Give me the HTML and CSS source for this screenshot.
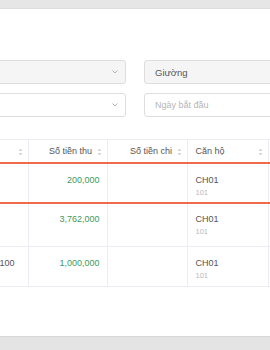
FILE: index.html
```html
<!DOCTYPE html>
<html lang="vi">
<head>
<meta charset="utf-8">
<title>Thu chi</title>
<link rel="stylesheet" href="styles.css">
</head>
<body>
<div class="topbar"></div>
<main class="panel">
  <div class="form">
    <div class="field field-filled">
      <span class="value"></span>
      <svg class="chev" width="6" height="4" viewBox="0 0 6 4"><path d="M0.5 0.5 L3 3 L5.5 0.5" fill="none" stroke="#b0b0b0" stroke-width="1"/></svg>
    </div>
    <div class="field field-filled">
      <span class="value">Giường</span>
    </div>
    <div class="field">
      <span class="value"></span>
      <svg class="chev" width="6" height="4" viewBox="0 0 6 4"><path d="M0.5 0.5 L3 3 L5.5 0.5" fill="none" stroke="#b0b0b0" stroke-width="1"/></svg>
    </div>
    <div class="field">
      <span class="placeholder">Ngày bắt đầu</span>
    </div>
  </div>

  <table class="grid">
    <colgroup>
      <col class="c1"><col class="c2"><col class="c3"><col class="c4"><col class="c5">
    </colgroup>
    <thead>
      <tr>
        <th class="num"><span class="sort"><svg width="5" height="8" viewBox="0 0 5 8"><path d="M2.5 0.5 L4.5 3 L0.5 3 Z M2.5 7.5 L4.5 5 L0.5 5 Z" fill="#d4d4d8"/></svg></span></th>
        <th class="num">Số tiền thu <span class="sort"><svg width="5" height="8" viewBox="0 0 5 8"><path d="M2.5 0.5 L4.5 3 L0.5 3 Z M2.5 7.5 L4.5 5 L0.5 5 Z" fill="#d4d4d8"/></svg></span></th>
        <th class="num">Số tiền chi <span class="sort"><svg width="5" height="8" viewBox="0 0 5 8"><path d="M2.5 0.5 L4.5 3 L0.5 3 Z M2.5 7.5 L4.5 5 L0.5 5 Z" fill="#d4d4d8"/></svg></span></th>
        <th class="txt"><span class="th-in">Căn hộ <span class="sort"><svg width="5" height="8" viewBox="0 0 5 8"><path d="M2.5 0.5 L4.5 3 L0.5 3 Z M2.5 7.5 L4.5 5 L0.5 5 Z" fill="#d4d4d8"/></svg></span></span></th>
        <th class="txt"></th>
      </tr>
    </thead>
    <tbody>
      <tr class="hl">
        <td class="num first"></td>
        <td class="num money">200,000</td>
        <td class="num"></td>
        <td class="txt"><div class="apt">CH01</div><div class="room">101</div></td>
        <td class="txt"></td>
      </tr>
      <tr class="tall">
        <td class="num first"></td>
        <td class="num money">3,762,000</td>
        <td class="num"></td>
        <td class="txt"><div class="apt">CH01</div><div class="room">101</div></td>
        <td class="txt"></td>
      </tr>
      <tr>
        <td class="num first">100</td>
        <td class="num money">1,000,000</td>
        <td class="num"></td>
        <td class="txt"><div class="apt">CH01</div><div class="room">101</div></td>
        <td class="txt"></td>
      </tr>
    </tbody>
  </table>
</main>
<div class="bottombar"></div>
</body>
</html>
```

FILE: styles.css
```css
* { box-sizing: border-box; }
html, body {
  margin: 0;
  padding: 0;
  width: 270px;
  height: 350px;
  overflow: hidden;
  background: #ffffff;
  font-family: "Liberation Sans", Arial, sans-serif;
  color: #555;
}
.topbar {
  height: 9px;
  background: #e6e6e6;
  border-bottom: 1px solid #dcdcdc;
}
.panel {
  height: 327px;
  overflow: hidden;
  padding-top: 51px;
}
.form {
  display: grid;
  grid-template-columns: 226px 226px;
  column-gap: 18px;
  row-gap: 9px;
  margin-left: -100px;
}
.field {
  height: 24px;
  border: 1px solid #dedede;
  border-radius: 3px;
  background: #fff;
  display: flex;
  align-items: center;
  justify-content: space-between;
  padding: 0 7px 0 10px;
  font-size: 9.5px;
}
.field-filled { background: #f5f5f5; }
.value { color: #555; }
.placeholder { color: #b5b5b5; font-size: 9px; }
.chev { display: block; }

.grid {
  margin-top: 22px;
  margin-left: -100px;
  border-collapse: collapse;
  table-layout: fixed;
  width: 488px;
  font-size: 9px;
}
.c1 { width: 128px; }
.c2 { width: 79px; }
.c3 { width: 80px; }
.c4 { width: 81px; }
.c5 { width: 120px; }
.grid th, .grid td {
  border-right: 1px solid #ecedf3;
  border-bottom: 1px solid #ecedf3;
}
.grid th {
  border-top: 1px solid #ecedf3;
  font-weight: normal;
  color: #555;
  line-height: 11px;
  padding: 6px 5px 5px 8px;
  height: 23px;
  white-space: nowrap;
}
.grid td {
  vertical-align: top;
  line-height: 12px;
  padding: 10px 7px 3px 8px;
  height: 40px;
}
.grid tr.tall td { height: 43px; padding-top: 9px; }
.num { text-align: right; }
.txt { text-align: left; }
.th-in { display: flex; justify-content: space-between; align-items: center; }
.sort { display: inline-block; vertical-align: middle; margin-left: 2px; }
.sort svg { display: block; }
.money { color: #3d9a5c; }
.first { padding-right: 13px !important; color: #555; }
.apt { color: #555; }
.room { color: #b8b8b8; font-size: 7.5px; margin-top: 1px; }
.grid tr.hl td {
  border-top: 2px solid #f26a4e;
  border-bottom: 2px solid #f26a4e;
}
.bottombar {
  height: 14px;
  background: #e4e4e4;
  border-top: 1px solid #d8d8d8;
}
```
